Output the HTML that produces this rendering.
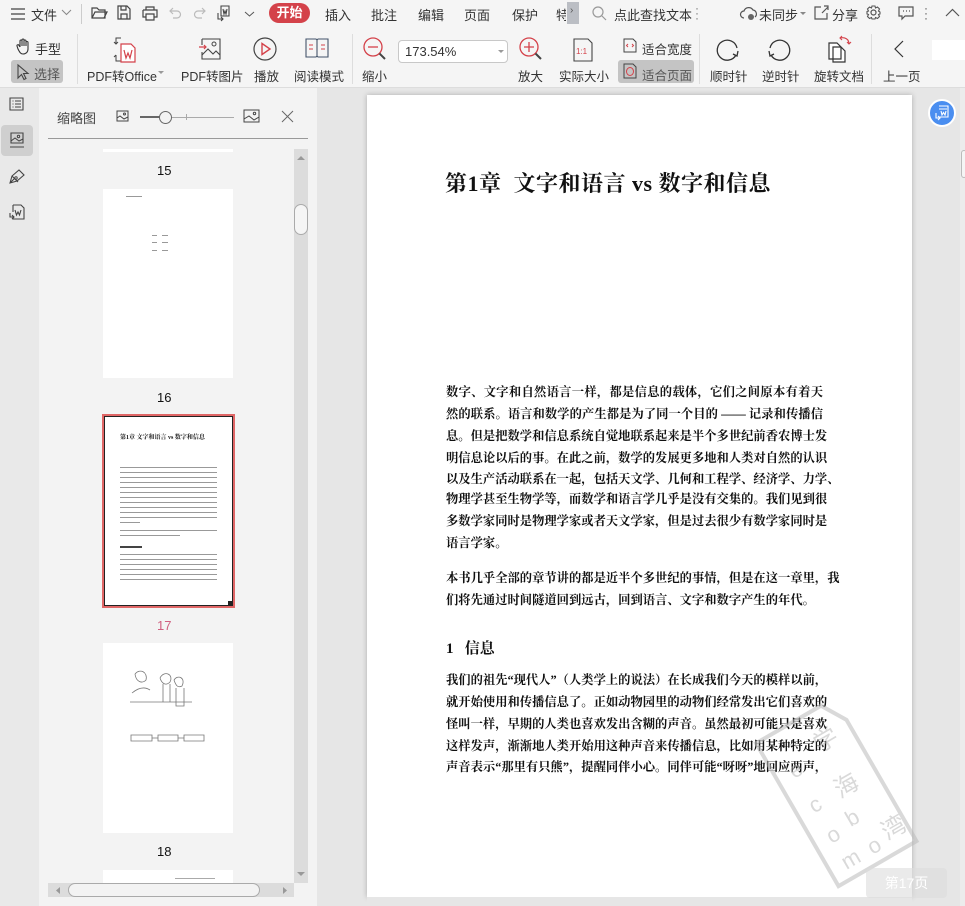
<!DOCTYPE html>
<html><head><meta charset="utf-8"><style>
*{margin:0;padding:0;box-sizing:border-box}
body{width:965px;height:906px;overflow:hidden;background:#e6e6e6;font-family:"Liberation Sans","Noto Sans CJK SC",sans-serif;position:relative;color:#333}
.a{position:absolute}
.t{font-size:13px;color:#333;white-space:nowrap}
.lbl{font-size:12.5px;color:#333;white-space:nowrap}
svg{position:absolute;overflow:visible}
.pg{font-family:"Liberation Serif","Noto Serif CJK SC",serif;font-weight:bold;color:#111}
.ln{position:absolute;left:446px;width:377px;font-size:12.3px;line-height:16px;text-align:justify;text-align-last:justify;white-space:nowrap;letter-spacing:0}
.th{position:absolute;background:#fff}
.g{position:absolute;height:1.3px;background:#999}
</style></head><body>
<div class="a" style="left:0;top:0;width:965px;height:88px;background:#f5f5f5;border-bottom:1px solid #ddd"></div>
<svg style="left:11px;top:8px" width="14" height="12"><path d="M0 1H14M0 6H14M0 11H14" stroke="#444" stroke-width="1.3"/></svg>
<div class="a t" style="left:31px;top:5px">文件</div>
<svg style="left:62px;top:10px" width="9" height="6"><path d="M0 0L4.5 4.5L9 0" fill="none" stroke="#888"/></svg>
<div class="a" style="left:81px;top:4px;width:1px;height:20px;background:#ccc"></div>
<svg style="left:91px;top:6px" width="16" height="14"><path d="M1 2H6L8 4H14V12H1Z M1 12L4 6H16L13 12" fill="none" stroke="#444" stroke-width="1.2"/></svg>
<svg style="left:117px;top:5px" width="14" height="15"><path d="M1 1H10L13 4V14H1Z M4 1V5H9V1 M4 14V9H10V14" fill="none" stroke="#444" stroke-width="1.2"/></svg>
<svg style="left:142px;top:6px" width="16" height="14"><path d="M4 4V1H12V4 M1 4H15V11H12 M4 11H1V4 M4 8H12V14H4Z" fill="none" stroke="#444" stroke-width="1.2"/></svg>
<svg style="left:169px;top:7px" width="12" height="11"><path d="M1 4H8A3.5 3.5 0 0 1 8 11H4 M4 1L1 4L4 7" fill="none" stroke="#bbb" stroke-width="1.2"/></svg>
<svg style="left:194px;top:7px" width="12" height="11"><path d="M11 4H4A3.5 3.5 0 0 0 4 11H8 M8 1L11 4L8 7" fill="none" stroke="#bbb" stroke-width="1.2"/></svg>
<svg style="left:217px;top:5px" width="16" height="16"><path d="M4 1H12V11H4Z M6 4L7 9L8 6L9 9L10 4 M1 8V14H6 M4 12L6 14L4 16" fill="none" stroke="#444" stroke-width="1.1"/></svg>
<svg style="left:245px;top:12px" width="9" height="5"><path d="M0 0L4.5 4L9 0" fill="none" stroke="#555"/></svg>
<div class="a" style="left:269px;top:3px;width:41px;height:20px;border-radius:10px;background:#d4424a;color:#fff;font-size:13px;font-weight:bold;text-align:center;line-height:20px">开始</div>
<div class="a t" style="left:325px;top:5px">插入</div>
<div class="a t" style="left:371px;top:5px">批注</div>
<div class="a t" style="left:418px;top:5px">编辑</div>
<div class="a t" style="left:464px;top:5px">页面</div>
<div class="a t" style="left:512px;top:5px">保护</div>
<div class="a t" style="left:556px;top:5px;width:10px;overflow:hidden">特</div>
<div class="a" style="left:567px;top:2px;width:12px;height:22px;background:#bbbec4"></div>
<div class="a" style="left:570px;top:5px;font-size:10px;color:#555">›</div>
<svg style="left:592px;top:6px" width="15" height="15"><circle cx="6" cy="6" r="5" fill="none" stroke="#999" stroke-width="1.2"/><path d="M10 10L14 14" stroke="#999" stroke-width="1.2"/></svg>
<div class="a t" style="left:614px;top:5px">点此查找文本</div>
<div class="a" style="left:695px;top:6px;font-size:12px;color:#777;line-height:5px">·<br>·<br>·</div>
<svg style="left:740px;top:6px" width="17" height="14"><path d="M4 12A3.5 3.5 0 0 1 4 5A5 5 0 0 1 13 4A4 4 0 0 1 15 11" fill="none" stroke="#555" stroke-width="1.2"/><circle cx="11" cy="11" r="3" fill="#666"/></svg>
<div class="a t" style="left:759px;top:5px">未同步</div>
<svg style="left:800px;top:12px" width="6" height="4"><path d="M0 0H6L3 3Z" fill="#888"/></svg>
<svg style="left:814px;top:5px" width="15" height="15"><path d="M7 2H1V14H13V8 M8 8L14 2 M10 1H14V5" fill="none" stroke="#555" stroke-width="1.2"/></svg>
<div class="a t" style="left:832px;top:5px">分享</div>
<svg style="left:866px;top:5px" width="15" height="15"><circle cx="7.5" cy="7.5" r="2.5" fill="none" stroke="#555" stroke-width="1.2"/><path d="M6 1H9L9.5 3L11.5 2L13.5 4L12.5 6L14 7V9L12.5 9.5L13.5 11.5L11.5 13.5L9.5 12.5L9 14H6L5.5 12.5L3.5 13.5L1.5 11.5L2.5 9.5L1 9V6.5L2.5 6L1.5 4L3.5 2L5.5 3Z" fill="none" stroke="#555" stroke-width="1.1"/></svg>
<svg style="left:898px;top:6px" width="16" height="14"><path d="M1 1H15V10H7L4 13V10H1Z M5 5H6 M8 5H9 M11 5H12" fill="none" stroke="#555" stroke-width="1.2"/></svg>
<div class="a" style="left:924px;top:6px;font-size:12px;color:#555;line-height:5px">·<br>·<br>·</div>
<svg style="left:946px;top:9px" width="13" height="7"><path d="M0 7L6.5 0.5L13 7" fill="none" stroke="#555" stroke-width="1.2"/></svg>
<svg style="left:16px;top:38px" width="16" height="17"><path d="M4 9V3A1 1 0 0 1 6 3V8V2A1 1 0 0 1 8 2V8V3A1 1 0 0 1 10 3V8V4.5A1 1 0 0 1 12 4.5V11C12 14 10 16 7 16C5 16 4 15 2 11L1 8A1 1 0 0 1 3 7.5L4 9" fill="none" stroke="#333" stroke-width="1.1"/></svg>
<div class="a t" style="left:35px;top:39px">手型</div>
<div class="a" style="left:11px;top:60px;width:52px;height:23px;background:#c4c4c4;border-radius:3px"></div>
<svg style="left:17px;top:64px" width="11" height="16"><path d="M1 1V14L4.5 10.5L7 15.5L9 14.5L6.5 9.5H11Z" fill="none" stroke="#444" stroke-width="1.1"/></svg>
<div class="a t" style="left:34px;top:64px;color:#555">选择</div>
<div class="a" style="left:77px;top:34px;width:1px;height:50px;background:#ddd"></div>
<svg style="left:113px;top:37px" width="26" height="26"><path d="M8 1H3V7 M1 5L3 7L5 5 M3 18V24H8 M1 20L3 18" fill="none" stroke="#444" stroke-width="1"/><path d="M8 7H18L22 11V25H8Z" fill="#fff" stroke="#d4424a" stroke-width="1.2"/><path d="M11 13L13 21L15 16L17 21L19 13" fill="none" stroke="#d4424a" stroke-width="1.2"/></svg>
<div class="a lbl" style="left:87px;top:66px">PDF转Office</div>
<svg style="left:158px;top:71px" width="6" height="4"><path d="M0 0H6L3 3Z" fill="#999"/></svg>
<svg style="left:199px;top:38px" width="22" height="22"><path d="M3 1H21V21H3V14 M3 7V1" fill="none" stroke="#444" stroke-width="1.1"/><circle cx="15" cy="6" r="2" fill="none" stroke="#444"/><path d="M3 17L9 11L14 16L17 13L21 17" fill="none" stroke="#444" stroke-width="1.1"/><path d="M0 9H7 M5 7L7 9L5 11" fill="none" stroke="#d4424a" stroke-width="1.2"/></svg>
<div class="a lbl" style="left:181px;top:66px">PDF转图片</div>
<svg style="left:253px;top:37px" width="24" height="24"><circle cx="12" cy="12" r="11" fill="none" stroke="#444" stroke-width="1.2"/><path d="M9 6.5L17 12L9 17.5Z" fill="none" stroke="#d4424a" stroke-width="1.4"/></svg>
<div class="a lbl" style="left:254px;top:66px">播放</div>
<svg style="left:305px;top:38px" width="24" height="20"><path d="M1 1H11L12 2L13 1H23V19H13L12 18L11 19H1Z M12 2V18" fill="none" stroke="#44546a" stroke-width="1.1"/><path d="M4 7H8 M4 11H8 M16 7H20 M16 11H20" stroke="#d4424a" stroke-width="1.1"/></svg>
<div class="a lbl" style="left:294px;top:66px">阅读模式</div>
<div class="a" style="left:352px;top:34px;width:1px;height:50px;background:#ddd"></div>
<svg style="left:363px;top:37px" width="24" height="24"><circle cx="10" cy="10" r="9" fill="none" stroke="#d4424a" stroke-width="1.3"/><path d="M5 10H15" stroke="#d4424a" stroke-width="1.3"/><path d="M16.5 16.5L22 22" stroke="#444" stroke-width="2"/></svg>
<div class="a lbl" style="left:362px;top:66px">缩小</div>
<div class="a" style="left:398px;top:40px;width:110px;height:23px;border:1px solid #c8c8c8;border-radius:4px;background:#fff"></div>
<div class="a t" style="left:405px;top:44px;color:#333">173.54%</div>
<svg style="left:498px;top:50px" width="6" height="4"><path d="M0 0H6L3 3Z" fill="#999"/></svg>
<svg style="left:519px;top:37px" width="24" height="24"><circle cx="10" cy="10" r="9" fill="none" stroke="#d4424a" stroke-width="1.3"/><path d="M5 10H15 M10 5V15" stroke="#d4424a" stroke-width="1.3"/><path d="M16.5 16.5L22 22" stroke="#444" stroke-width="2"/></svg>
<div class="a lbl" style="left:518px;top:66px">放大</div>
<svg style="left:573px;top:38px" width="20" height="24"><path d="M1 1H15L19 5V23H1Z" fill="none" stroke="#444" stroke-width="1.1"/><text x="3" y="16" font-size="8" fill="#d4424a" font-family="Liberation Sans">1:1</text></svg>
<div class="a lbl" style="left:559px;top:66px">实际大小</div>
<svg style="left:623px;top:38px" width="14" height="15"><path d="M1 1H10L13 4V14H1Z" fill="none" stroke="#444"/><path d="M5 6L3.5 7.5L5 9 M9 6L10.5 7.5L9 9" fill="none" stroke="#d4424a"/></svg>
<div class="a lbl" style="left:642px;top:39px">适合宽度</div>
<div class="a" style="left:618px;top:60px;width:76px;height:23px;background:#c4c4c4;border-radius:3px"></div>
<svg style="left:623px;top:63px" width="14" height="16"><path d="M1 1H10L13 4V15H1Z" fill="none" stroke="#444"/><ellipse cx="7" cy="8.5" rx="3.5" ry="4" fill="none" stroke="#d4424a"/></svg>
<div class="a lbl" style="left:642px;top:65px;color:#555">适合页面</div>
<div class="a" style="left:699px;top:34px;width:1px;height:50px;background:#ddd"></div>
<svg style="left:716px;top:38px" width="24" height="24"><path d="M20 17A10 10 0 1 1 21 10" fill="none" stroke="#333" stroke-width="1.3"/><path d="M17 16L21 18L22 13" fill="none" stroke="#333" stroke-width="1.3"/></svg>
<div class="a lbl" style="left:710px;top:66px">顺时针</div>
<svg style="left:767px;top:38px" width="24" height="24"><path d="M4 17A10 10 0 1 0 3 10" fill="none" stroke="#333" stroke-width="1.3"/><path d="M7 16L3 18L2 13" fill="none" stroke="#333" stroke-width="1.3"/></svg>
<div class="a lbl" style="left:762px;top:66px">逆时针</div>
<svg style="left:825px;top:36px" width="28" height="26"><path d="M4 7H12L16 11V23H4Z M8 11H16L20 15V26H8Z" fill="#fff" stroke="#333" stroke-width="1.2"/><path d="M15 2C20 1 24 3 24 8 M22 6L24 8L26 6 M17 0L15 2L17 4" fill="none" stroke="#d4424a" stroke-width="1.1"/></svg>
<div class="a lbl" style="left:814px;top:66px">旋转文档</div>
<div class="a" style="left:871px;top:34px;width:1px;height:50px;background:#ddd"></div>
<svg style="left:894px;top:40px" width="10" height="18"><path d="M9 1L1 9L9 17" fill="none" stroke="#333" stroke-width="1.2"/></svg>
<div class="a lbl" style="left:883px;top:66px">上一页</div>
<div class="a" style="left:932px;top:40px;width:33px;height:20px;background:#fff"></div>
<div class="a" style="left:0;top:88px;width:39px;height:818px;background:#e9e9e9"></div>
<svg style="left:9px;top:97px" width="15" height="14"><path d="M1 1H14V13H1Z M3.5 4H4.5 M6 4H12 M3.5 7H4.5 M6 7H12 M3.5 10H4.5 M6 10H12" fill="none" stroke="#444" stroke-width="1.1"/></svg>
<div class="a" style="left:1px;top:125px;width:32px;height:31px;background:#cfcfcf;border-radius:4px"></div>
<svg style="left:9px;top:132px" width="16" height="17"><path d="M2 1H14V11H2Z M1 15H15" fill="none" stroke="#444" stroke-width="1.1"/><circle cx="9.5" cy="4.5" r="1.2" fill="none" stroke="#444"/><path d="M2 9L6 6L10 9L14 7" fill="none" stroke="#444"/></svg>
<svg style="left:9px;top:168px" width="16" height="16"><path d="M1 15L3 8L10 2L15 7L8 13Z M3 8L9 14 M1 15L6 10" fill="none" stroke="#444" stroke-width="1.1"/><circle cx="7" cy="10" r="1.2" fill="none" stroke="#444"/></svg>
<svg style="left:9px;top:204px" width="16" height="17"><path d="M4 1H12L15 4V15H4V12 M4 8V1 M6 6L7.5 11L9 8L10.5 11L12 6 M1 9V13H5 M3 11L5 13L3 15" fill="none" stroke="#444" stroke-width="1.1"/></svg>
<div class="a" style="left:39px;top:88px;width:278px;height:818px;background:#f3f3f3"></div>
<div class="a t" style="left:57px;top:108px;color:#444">缩略图</div>
<svg style="left:116px;top:110px" width="13" height="12"><path d="M1 1H12V11H1Z M1 8L4 6L8 9L12 7" fill="none" stroke="#444"/><circle cx="8.5" cy="4" r="1" fill="none" stroke="#444"/></svg>
<div class="a" style="left:140px;top:117px;width:94px;height:1px;background:#aaa"></div>
<div class="a" style="left:140px;top:116px;width:25px;height:2px;background:#666"></div>
<div class="a" style="left:186px;top:114px;width:1px;height:6px;background:#aaa"></div>
<div class="a" style="left:159px;top:111px;width:13px;height:13px;border:1px solid #666;border-radius:50%;background:#f3f3f3"></div>
<svg style="left:243px;top:109px" width="17" height="14"><path d="M1 1H16V13H1Z M1 10L6 7L11 11L16 8" fill="none" stroke="#444"/><circle cx="11.5" cy="4.5" r="1.2" fill="none" stroke="#444"/></svg>
<svg style="left:282px;top:111px" width="11" height="11"><path d="M0 0L11 11M11 0L0 11" stroke="#666" stroke-width="1"/></svg>
<div class="a" style="left:48px;top:138px;width:260px;height:1px;background:#999"></div>
<div class="th" style="left:103px;top:149px;width:130px;height:3px"></div>
<div class="a" style="left:157px;top:163px;font-size:13px;color:#111">15</div>
<div class="th" style="left:103px;top:189px;width:130px;height:189px"></div>
<div class="g" style="left:126px;top:196px;width:16px"></div>
<div class="g" style="left:152px;top:235px;width:5px"></div><div class="g" style="left:162px;top:235px;width:6px"></div>
<div class="g" style="left:152px;top:242px;width:5px"></div><div class="g" style="left:162px;top:242px;width:6px"></div>
<div class="g" style="left:152px;top:250px;width:5px"></div><div class="g" style="left:162px;top:250px;width:6px"></div>
<div class="a" style="left:157px;top:390px;font-size:13px;color:#111">16</div>
<div class="a" style="left:102px;top:414px;width:133px;height:194px;border:2px solid #e06666"></div>
<div class="th" style="left:104px;top:416px;width:129px;height:190px;border:1px solid #222"></div>
<div class="a pg" style="left:120px;top:432px;font-size:6px">第1章 文字和语言 vs 数字和信息</div>
<div id="p17"></div>
<div class="a" style="left:228px;top:601px;width:5px;height:5px;background:#222"></div>
<div class="a" style="left:157px;top:618px;font-size:13px;color:#d06080">17</div>
<div class="th" style="left:103px;top:643px;width:130px;height:190px"></div>
<svg style="left:130px;top:668px" width="65" height="40"><path d="M2 25C8 20 14 18 20 22 M5 6C10 0 18 4 16 12C12 16 6 14 5 6 M30 10C34 2 44 6 40 14C36 18 32 16 30 10 M33 16V34H40V16 M44 12C48 6 56 10 52 18C48 20 46 18 44 12 M46 20V38H54V20 M0 34H62" fill="none" stroke="#777" stroke-width=".8"/></svg>
<svg style="left:130px;top:732px" width="75" height="12"><path d="M1 3H22V9H1Z M28 3H48V9H28Z M54 3H74V9H54Z M22 6H28 M48 6H54" fill="none" stroke="#777" stroke-width=".8"/></svg>
<div class="a" style="left:157px;top:844px;font-size:13px;color:#111">18</div>
<div class="th" style="left:103px;top:870px;width:130px;height:13px"></div>
<div class="g" style="left:175px;top:878px;width:40px;background:#aaa"></div>
<div class="a" style="left:294px;top:149px;width:14px;height:734px;background:#dcdcdc"></div>
<svg style="left:297px;top:156px" width="8" height="4"><path d="M0 4H8L4 0Z" fill="#999"/></svg>
<div class="a" style="left:294px;top:204px;width:14px;height:31px;border:1px solid #aaa;border-radius:7px;background:#f5f5f5"></div>
<svg style="left:297px;top:872px" width="8" height="4"><path d="M0 0H8L4 4Z" fill="#999"/></svg>
<div class="a" style="left:48px;top:883px;width:246px;height:14px;background:#dcdcdc"></div>
<svg style="left:56px;top:887px" width="4" height="7"><path d="M4 0V7L0 3.5Z" fill="#999"/></svg>
<svg style="left:283px;top:887px" width="4" height="7"><path d="M0 0V7L4 3.5Z" fill="#999"/></svg>
<div class="a" style="left:68px;top:883px;width:192px;height:14px;border:1px solid #aaa;border-radius:7px;background:#f3f3f3"></div>
<div class="a" style="left:317px;top:88px;width:648px;height:818px;background:#e6e6e6"></div>
<div class="a" style="left:367px;top:95px;width:545px;height:802px;background:#fff;box-shadow:0 0 5px rgba(0,0,0,.25)"></div>
<div class="a" style="left:367px;top:897px;width:545px;height:9px;background:#e6e6e6"></div>
<div class="a pg" style="left:445px;top:167px;font-size:22px;letter-spacing:.5px">第1章&nbsp; 文字和语言 vs 数字和信息</div>
<div class="pg">
<div class="ln" style="top:384px">数字、文字和自然语言一样，都是信息的载体，它们之间原本有着天</div>
<div class="ln" style="top:406px">然的联系。语言和数学的产生都是为了同一个目的 —— 记录和传播信</div>
<div class="ln" style="top:428px">息。但是把数学和信息系统自觉地联系起来是半个多世纪前香农博士发</div>
<div class="ln" style="top:450px">明信息论以后的事。在此之前，数学的发展更多地和人类对自然的认识</div>
<div class="ln" style="top:471px">以及生产活动联系在一起，包括天文学、几何和工程学、经济学、力学、</div>
<div class="ln" style="top:491px">物理学甚至生物学等，而数学和语言学几乎是没有交集的。我们见到很</div>
<div class="ln" style="top:513px">多数学家同时是物理学家或者天文学家，但是过去很少有数学家同时是</div>
<div class="ln" style="top:535px;text-align-last:left;width:auto">语言学家。</div>
<div class="ln" style="top:570px">本书几乎全部的章节讲的都是近半个多世纪的事情，但是在这一章里，我</div>
<div class="ln" style="top:592px;text-align-last:left;width:auto">们将先通过时间隧道回到远古，回到语言、文字和数字产生的年代。</div>
<div class="a" style="left:446px;top:637px;font-size:15px">1&nbsp;&nbsp; 信息</div>
<div class="ln" style="top:672px">我们的祖先“现代人”（人类学上的说法）在长成我们今天的模样以前，</div>
<div class="ln" style="top:694px">就开始使用和传播信息了。正如动物园里的动物们经常发出它们喜欢的</div>
<div class="ln" style="top:716px">怪叫一样，早期的人类也喜欢发出含糊的声音。虽然最初可能只是喜欢</div>
<div class="ln" style="top:738px">这样发声，渐渐地人类开始用这种声音来传播信息，比如用某种特定的</div>
<div class="ln" style="top:759px;width:373px">声音表示“那里有只熊”，提醒同伴小心。同伴可能“呀呀”地回应两声，</div>
</div>
<svg style="left:755px;top:690px" width="160" height="200"><g transform="rotate(-30 80 100)" opacity=".55"><path d="M35 20H110L125 45V185H35Z" fill="none" stroke="#bbb" stroke-width="4"/><text x="50" y="70" font-size="22" fill="#bbb" font-family="Liberation Sans">e</text><text x="85" y="60" font-size="24" fill="#bbb" font-family="Noto Sans CJK SC">学</text><text x="50" y="110" font-size="22" fill="#bbb">c</text><text x="80" y="110" font-size="24" fill="#bbb" font-family="Noto Sans CJK SC">海</text><text x="50" y="145" font-size="22" fill="#bbb">o</text><text x="75" y="140" font-size="22" fill="#bbb">b</text><text x="50" y="175" font-size="22" fill="#bbb">m</text><text x="80" y="175" font-size="22" fill="#bbb">o</text><text x="100" y="170" font-size="24" fill="#bbb" font-family="Noto Sans CJK SC">湾</text></g></svg>
<div class="a" style="left:866px;top:868px;width:81px;height:30px;background:rgba(220,220,220,.6);border-radius:4px;color:#fff;font-size:14px;text-align:center;line-height:30px">第17页</div>
<div class="a" style="left:928px;top:99px;width:28px;height:28px;border-radius:50%;background:#4a8ef0;border:2px solid #fff"></div>
<svg style="left:934px;top:105px" width="16" height="16"><path d="M5 1H14V12H5 M5 4H13 M7 6L8 10L9.5 7.5L11 10L12 6 M2 8V13H6 M4 11L6 13L4 15" fill="none" stroke="#fff" stroke-width="1.1"/></svg>
<div class="a" style="left:960px;top:88px;width:5px;height:818px;background:#ececec"></div>
<div class="a" style="left:961px;top:150px;width:6px;height:28px;border:1px solid #bbb;border-radius:4px;background:#f5f5f5"></div>
<script>
var c=document.getElementById('p17'),h='';
function L(y,x,w){h+='<div class="g" style="left:'+x+'px;top:'+y+'px;width:'+w+'px"></div>';}
var ys=[467,472,477,482,487,492,497,502,507,512,517,522];
for(var i=0;i<ys.length;i++)L(ys[i],120,i==11?20:97);
L(530,120,97);L(535,120,60);
h+='<div class="g" style="left:120px;top:546px;width:22px;background:#444;height:2px"></div>';
var y2=[554,559,564,569,574,579];for(i=0;i<y2.length;i++)L(y2[i],120,97);
var y3=[662,714,719,724,754,759,764,769,774,779,784,800,805];for(i=0;i<y3.length;i++)L(y3[i],120,i==0?55:95);
L(651,110,15);
c.innerHTML=h;
</script>
</body></html>
